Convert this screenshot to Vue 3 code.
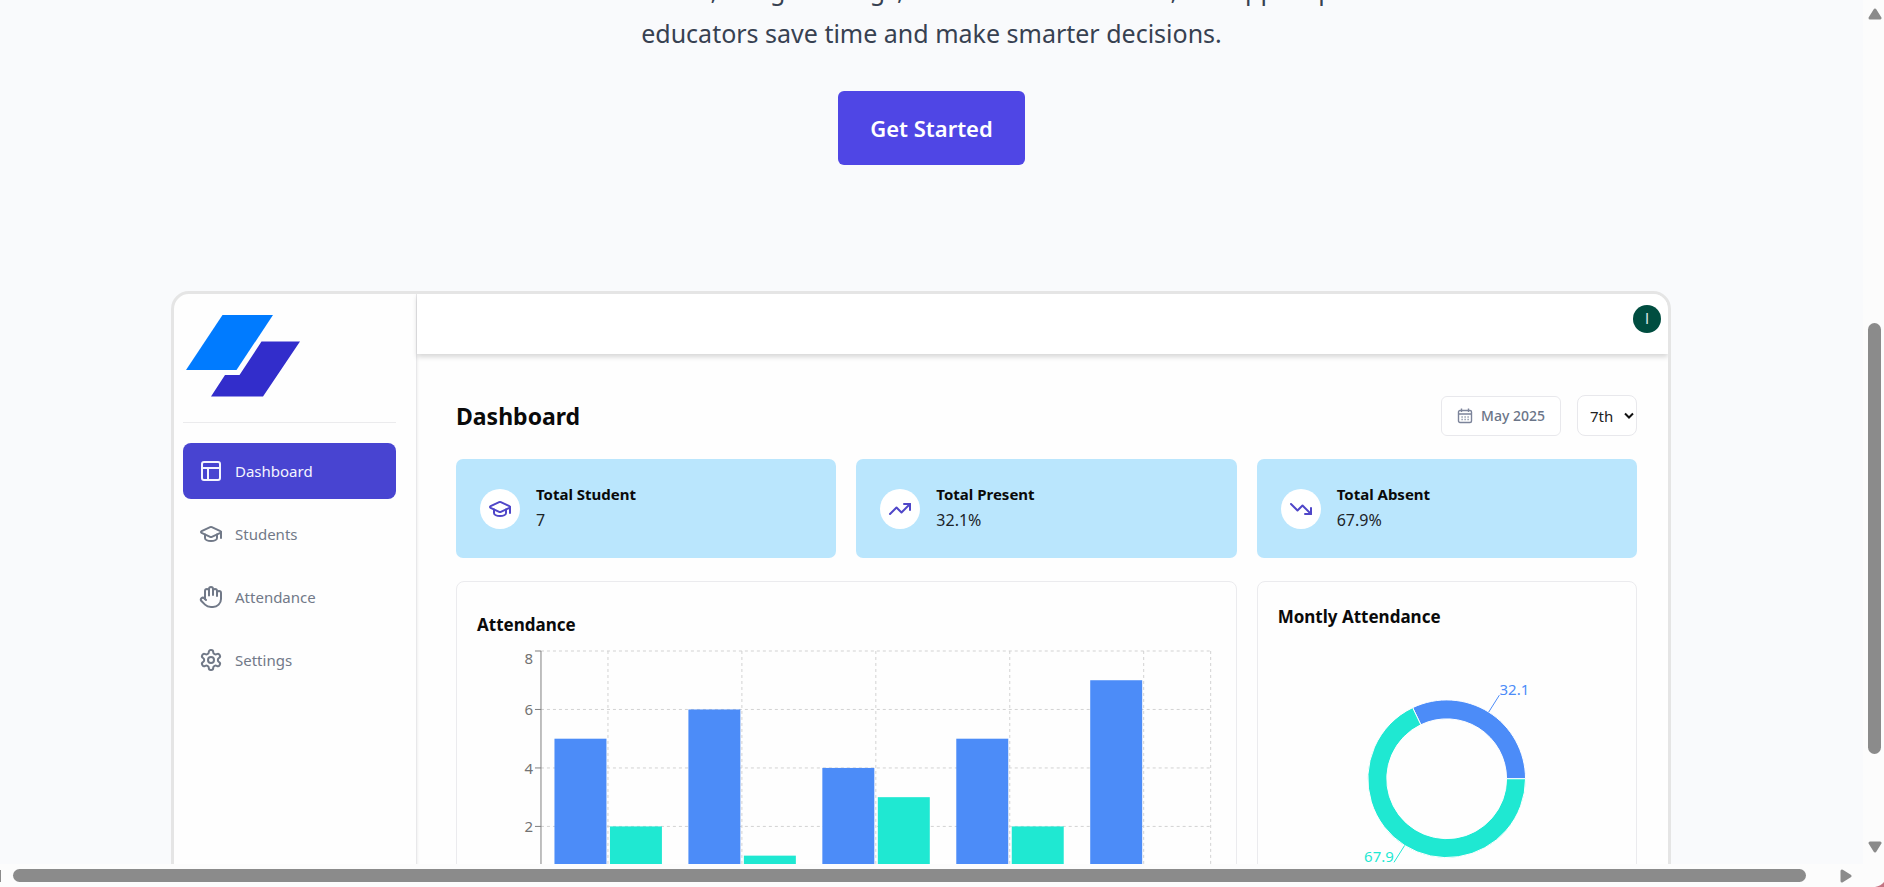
<script setup>
const icons = {
  layout: ['M5 3h14a2 2 0 0 1 2 2v14a2 2 0 0 1-2 2H5a2 2 0 0 1-2-2V5a2 2 0 0 1 2-2z', 'M3 9h18', 'M9 21V9'],
  cap: [
    'M21.42 10.922a1 1 0 0 0-.019-1.838L12.83 5.18a2 2 0 0 0-1.66 0L2.6 9.08a1 1 0 0 0 0 1.832l8.57 3.908a2 2 0 0 0 1.66 0z',
    'M22 10v6',
    'M6 12.5V16a6 3 0 0 0 12 0v-3.5',
  ],
  hand: [
    'M18 11V6a2 2 0 0 0-4 0',
    'M14 10V4a2 2 0 0 0-4 0v2',
    'M10 10.5V6a2 2 0 0 0-4 0v8',
    'M18 8a2 2 0 1 1 4 0v6a8 8 0 0 1-8 8h-2c-2.8 0-4.5-.86-5.99-2.34l-3.6-3.6a2 2 0 0 1 2.83-2.82L7 15',
  ],
  gear: [
    'M12.22 2h-.44a2 2 0 0 0-2 2v.18a2 2 0 0 1-1 1.73l-.43.25a2 2 0 0 1-2 0l-.15-.08a2 2 0 0 0-2.73.73l-.22.38a2 2 0 0 0 .73 2.73l.15.1a2 2 0 0 1 1 1.72v.51a2 2 0 0 1-1 1.74l-.15.09a2 2 0 0 0-.73 2.73l.22.38a2 2 0 0 0 2.73.73l.15-.08a2 2 0 0 1 2 0l.43.25a2 2 0 0 1 1 1.73V20a2 2 0 0 0 2 2h.44a2 2 0 0 0 2-2v-.18a2 2 0 0 1 1-1.73l.43-.25a2 2 0 0 1 2 0l.15.08a2 2 0 0 0 2.73-.73l.22-.39a2 2 0 0 0-.73-2.73l-.15-.08a2 2 0 0 1-1-1.74v-.5a2 2 0 0 1 1-1.74l.15-.09a2 2 0 0 0 .73-2.73l-.22-.38a2 2 0 0 0-2.73-.73l-.15.08a2 2 0 0 1-2 0l-.43-.25a2 2 0 0 1-1-1.73V4a2 2 0 0 0-2-2z',
    'M15 12a3 3 0 1 1-6 0 3 3 0 0 1 6 0z',
  ],
  up: ['M22 7l-8.500 8.500-5-5L2 17', 'M16 7h6v6'],
  down: ['M22 17l-8.500-8.500-5 5L2 7', 'M16 17h6v-6'],
}

const menu = [
  { label: 'Dashboard', icon: 'layout', active: true },
  { label: 'Students', icon: 'cap' },
  { label: 'Attendance', icon: 'hand' },
  { label: 'Settings', icon: 'gear' },
]

const stats = [
  { label: 'Total Student', value: '7', icon: 'cap' },
  { label: 'Total Present', value: '32.1%', icon: 'up' },
  { label: 'Total Absent', value: '67.9%', icon: 'down' },
]

const unit = 29.25
const days = [
  [5, 2],
  [6, 1],
  [4, 3],
  [5, 2],
  [7, 0],
]
const plot = { left: 64, right: 734, top: 10, bottom: 244 }
const band = (plot.right - plot.left) / days.length
const bars = days.flatMap(([present, absent], i) => {
  const x = plot.left + i * band
  return [
    { x: x + 13.5, h: present * unit, color: '#4c8cf8' },
    { x: x + 69, h: absent * unit, color: '#1fe8d2' },
  ]
})
const columns = [...days.map((_, i) => plot.left + (i + 0.5) * band), plot.right]
const ticks = [8, 6, 4, 2].map((v) => ({ v, y: plot.bottom - v * unit }))

const cx = 169
const cy = 120
function point(r, share) {
  const a = share * 2 * Math.PI
  return `${(cx + r * Math.cos(a)).toFixed(2)} ${(cy - r * Math.sin(a)).toFixed(2)}`
}
function ring(from, to) {
  const large = to - from > 0.5 ? 1 : 0
  return `M${point(79, from)}A79 79 0 ${large} 0 ${point(79, to)}L${point(60, to)}A60 60 0 ${large} 1 ${point(60, from)}Z`
}
const slices = [
  { d: ring(0, 0.321), line: `M${point(79, 0.1605)}L${point(99, 0.1605)}`, color: '#4c8cf8' },
  { d: ring(0.321, 1), line: `M${point(79, 0.6605)}L${point(99, 0.6605)}`, color: '#1fe8d2' },
]
</script>

<template>
  <div class="window">
    <main class="page">
      <section class="hero">
        <p class="lead">
          With attendance, budget ratings, and instant reminders, our app helps<br />
          educators save time and make smarter decisions.
        </p>
        <button type="button" class="cta">Get Started</button>
      </section>

      <section class="frame">
        <aside class="sidebar">
          <svg class="logo" viewBox="0 0 116 84" aria-hidden="true">
            <path d="M1 56 37.500 1H88L51.500 56z" fill="#007bff" />
            <path d="M26 82.500 40 61H54.500L76.500 27.500H115L78 82.500z" fill="#322dcb" />
          </svg>
          <nav class="menu">
            <a v-for="m in menu" :key="m.label" href="#" class="item" :class="{ active: m.active }">
              <svg class="icon" viewBox="0 0 24 24" aria-hidden="true">
                <path v-for="d in icons[m.icon]" :key="d" :d="d" />
              </svg>
              <span>{{ m.label }}</span>
            </a>
          </nav>
        </aside>

        <div class="main">
          <header class="topbar">
            <button type="button" class="avatar" aria-label="Account">I</button>
          </header>

          <div class="content">
            <div class="heading">
              <h2>Dashboard</h2>
              <div class="filters">
                <button type="button" class="month">
                  <svg class="calendar" viewBox="0 0 16 16" aria-hidden="true">
                    <path d="M3 2.500h10a1.500 1.500 0 0 1 1.500 1.500v9a1.500 1.500 0 0 1-1.500 1.500H3A1.500 1.500 0 0 1 1.500 13V4A1.500 1.500 0 0 1 3 2.500zM1.500 6h13M4.500 0.500v3.500M11.500 0.500v3.500" />
                    <path d="M4.500 9h1.200M7.500 9h1.200M10.500 9h1.200M4.500 11.500h1.200M7.500 11.500h1.200M10.500 11.500h1.200" />
                  </svg>
                  <span>May 2025</span>
                </button>
                <span class="grade">
                  <select aria-label="Grade">
                    <option>7th</option>
                  </select>
                  <svg class="chevron" viewBox="0 0 10 7" aria-hidden="true"><path d="M1 1.500l4 4 4-4" /></svg>
                </span>
              </div>
            </div>

            <div class="grid">
              <div v-for="s in stats" :key="s.label" class="stat">
                <span class="badge">
                  <svg class="icon" viewBox="0 0 24 24" aria-hidden="true">
                    <path v-for="d in icons[s.icon]" :key="d" :d="d" />
                  </svg>
                </span>
                <div class="figures">
                  <h3>{{ s.label }}</h3>
                  <p>{{ s.value }}</p>
                </div>
              </div>

              <article class="card wide">
                <h3>Attendance</h3>
                <svg class="chart" viewBox="0 0 739 300" role="img" aria-label="Attendance chart">
                  <g class="gridlines">
                    <line v-for="t in ticks" :key="t.v" :x1="plot.left" :x2="plot.right" :y1="t.y" :y2="t.y" />
                    <line v-for="c in columns" :key="c" :x1="c" :x2="c" :y1="plot.top" :y2="plot.bottom" />
                  </g>
                  <rect
                    v-for="b in bars"
                    :key="b.x"
                    :x="b.x"
                    :y="plot.bottom - b.h"
                    width="52"
                    :height="b.h"
                    :fill="b.color"
                  />
                  <line class="axis" :x1="plot.left" :x2="plot.left" :y1="plot.top" :y2="plot.bottom" />
                  <line v-for="t in ticks" :key="'a' + t.v" class="axis" x1="58" :x2="plot.left" :y1="t.y" :y2="t.y" />
                  <text v-for="t in ticks" :key="'t' + t.v" x="56" :y="t.v === 8 ? t.y + 13 : t.y + 6">{{ t.v }}</text>
                </svg>
              </article>

              <article class="card">
                <h3>Montly Attendance</h3>
                <svg class="donut" viewBox="0 0 339 260" role="img" aria-label="Monthly attendance share">
                  <g v-for="s in slices" :key="s.color">
                    <path :d="s.d" :fill="s.color" stroke="#fff" />
                    <path :d="s.line" :stroke="s.color" fill="none" />
                  </g>
                  <text x="222" y="36" fill="#4c8cf8">32.1</text>
                  <text x="116" y="203" fill="#1fe8d2" text-anchor="end">67.9</text>
                </svg>
              </article>
            </div>
          </div>
        </div>
      </section>
    </main>

    <div class="vbar">
      <svg class="arrow" viewBox="0 0 14 12" aria-hidden="true"><path d="M7 2 12 10H2z" /></svg>
      <div class="vtrack"><div class="vthumb"></div></div>
      <svg class="arrow" viewBox="0 0 14 12" aria-hidden="true"><path d="M7 10 12 2H2z" /></svg>
    </div>
    <div class="hbar">
      <div class="hedge"></div>
      <div class="hthumb"></div>
      <svg class="side" viewBox="0 0 12 14" aria-hidden="true"><path d="M2 2v10l8-5z" /></svg>
    </div>
    <svg class="corner" viewBox="0 0 21 23" aria-hidden="true"><path d="M12 23Q18 22 21 18V23z" fill="#c47583" /></svg>
  </div>
</template>

<style>
body {
  margin: 0;
}
</style>

<style scoped>
* {
  box-sizing: border-box;
}
h2,
h3,
p {
  margin: 0;
}
button,
select {
  font: inherit;
}
.window {
  display: grid;
  grid-template-columns: minmax(0, 1fr) 21px;
  grid-template-rows: minmax(0, 1fr) 23px;
  height: 100vh;
  background: #fcfcfc;
  font-family: 'Noto Sans', 'Open Sans', sans-serif;
}
.page {
  overflow: hidden;
  background: #f9fafc;
}
.hero {
  display: flex;
  flex-direction: column;
  align-items: center;
  gap: 36px;
  margin-top: -31px;
}
.lead {
  color: #374151;
  font-size: 25px;
  line-height: 43px;
  text-align: center;
  white-space: nowrap;
}
.cta {
  height: 74px;
  padding: 0 32px;
  border: 0;
  border-radius: 6px;
  background: #4f46e5;
  color: #fff;
  font-size: 22px;
  font-weight: 600;
}
.frame {
  display: grid;
  grid-template-columns: 243px minmax(0, 1fr);
  margin: 126px 192px 0 171px;
  border: 3px solid #e5e5e5;
  border-radius: 18px;
  background: #fefefe;
  overflow: hidden;
}
.sidebar {
  padding: 20px 20px 0 9px;
  border-right: 1px solid #e8e8ea;
  box-shadow: 0 0 3px #00000018;
}
.logo {
  display: block;
  width: 116px;
  height: 84px;
  margin-left: 2px;
}
.menu {
  display: flex;
  flex-direction: column;
  gap: 7px;
  margin-top: 24px;
  padding-top: 20px;
  border-top: 1px solid #ebebed;
}
.item {
  display: flex;
  align-items: center;
  gap: 12px;
  height: 56px;
  padding: 0 16px;
  border-radius: 8px;
  color: #717988;
  font-size: 15px;
  text-decoration: none;
}
.item.active {
  background: #4844d1;
  color: #f4f4ff;
}
.icon {
  width: 24px;
  height: 24px;
  fill: none;
  stroke: currentColor;
  stroke-width: 2;
  stroke-linecap: round;
  stroke-linejoin: round;
}
.topbar {
  display: flex;
  justify-content: flex-end;
  height: 60px;
  padding: 11px 7px;
  background: #fff;
  box-shadow: 0 3px 5px #00000028;
}
.avatar {
  width: 28px;
  height: 28px;
  padding: 0;
  border: 0;
  border-radius: 50%;
  background: #004d40;
  color: #d5e3e0;
  font-family: Roboto, sans-serif;
  font-size: 15px;
  font-weight: 400;
}
.content {
  padding: 41px 31px 40px 39px;
}
.heading {
  display: flex;
  align-items: center;
  justify-content: space-between;
}
.heading h2 {
  color: #0a0a0a;
  font-size: 23px;
  font-weight: 700;
}
.filters {
  display: flex;
  align-items: center;
  gap: 16px;
}
.month {
  display: flex;
  align-items: center;
  gap: 8px;
  height: 40px;
  padding: 0 15px;
  border: 1px solid #e8e8ec;
  border-radius: 6px;
  background: #fff;
  color: #6b7588;
  font-size: 14px;
  font-weight: 500;
}
.calendar {
  width: 16px;
  height: 16px;
  fill: none;
  stroke: #7c849a;
  stroke-width: 1.4;
}
.grade {
  position: relative;
}
.grade select {
  display: block;
  width: 60px;
  height: 41px;
  padding: 0 12px;
  border: 1px solid #e8e8ec;
  border-radius: 8px;
  appearance: none;
  background: #fff;
  color: #222;
  font-size: 15px;
}
.chevron {
  position: absolute;
  top: 17px;
  right: 3px;
  width: 10px;
  height: 7px;
  fill: none;
  stroke: #111;
  stroke-width: 2;
  pointer-events: none;
}
.grid {
  display: grid;
  grid-template-columns: repeat(3, minmax(0, 1fr));
  gap: 23px 20px;
  margin-top: 23px;
}
.stat {
  display: flex;
  align-items: center;
  gap: 16px;
  height: 99px;
  padding: 0 24px;
  border-radius: 7px;
  background: #bae6fd;
}
.badge {
  display: grid;
  place-items: center;
  width: 40px;
  height: 40px;
  border-radius: 50%;
  background: #fff;
  color: #4f46c8;
}
.figures {
  padding-bottom: 3px;
}
.stat h3 {
  color: #0a0a0a;
  font-size: 15px;
  font-weight: 700;
  line-height: 26px;
}
.stat p {
  color: #1c2429;
  font-size: 16px;
  line-height: 26px;
}
.card {
  padding: 21px 20px;
  border: 1px solid #ebebee;
  border-radius: 8px;
}
.card h3 {
  color: #0a0a0a;
  font-size: 17px;
  font-weight: 700;
  line-height: 28px;
}
.wide {
  grid-column: span 2;
  padding-top: 29px;
}
.chart,
.donut {
  display: block;
  width: 100%;
}
.chart {
  margin-top: 2px;
}
.gridlines {
  stroke: #d2d2d2;
  stroke-dasharray: 3 3;
}
.axis {
  stroke: #808080;
}
.chart text {
  fill: #737373;
  font-size: 15px;
  text-anchor: end;
}
.donut {
  margin-top: 28px;
}
.donut text {
  font-size: 15px;
}
.vbar {
  display: flex;
  flex-direction: column;
  align-items: center;
  padding: 8px 0 11px 2px;
}
.arrow {
  width: 14px;
  height: 12px;
}
.arrow path,
.side path {
  fill: #8b8b8b;
  stroke: #8b8b8b;
  stroke-width: 3;
  stroke-linejoin: round;
}
.vtrack {
  display: grid;
  grid-template-rows: 303fr 431fr 87fr;
  flex: 1;
}
.vthumb {
  grid-row: 2;
  width: 13px;
  border-radius: 7px;
  background: #8b8b8b;
}
.hbar {
  display: flex;
  align-items: center;
  padding-right: 11px;
}
.hedge {
  width: 1px;
  height: 12px;
  background: #8b8b8b;
}
.hthumb {
  flex: 1;
  height: 13px;
  margin: 0 34px 0 12px;
  border-radius: 7px;
  background: #8b8b8b;
}
.side {
  width: 12px;
  height: 14px;
}
.corner {
  width: 21px;
  height: 23px;
}
</style>
